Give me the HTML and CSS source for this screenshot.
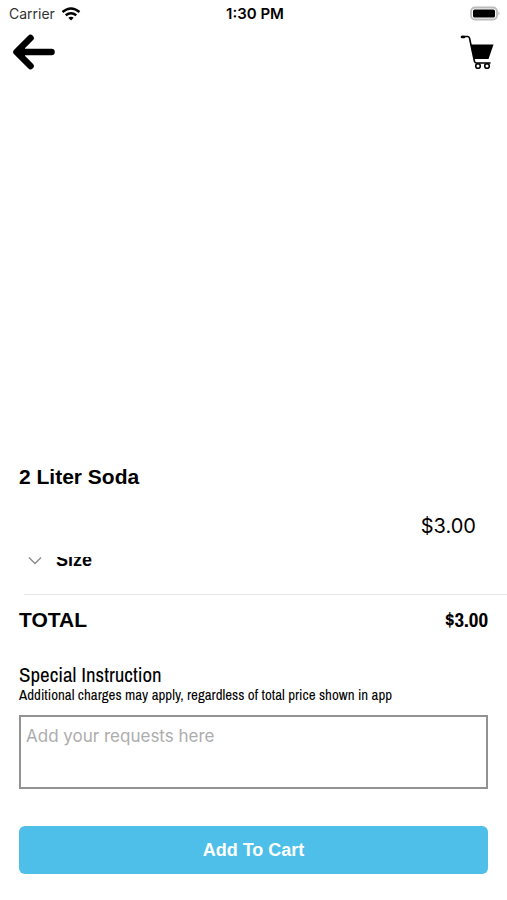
FILE: index.html
```html
<!DOCTYPE html>
<html lang="en">
<head>
<meta charset="utf-8">
<meta name="viewport" content="width=device-width, initial-scale=1">
<title>2 Liter Soda</title>
<link rel="stylesheet" href="styles.css">
</head>
<body>
<div class="status">
  <div class="carrier">
    <span>Carrier</span>
    <svg width="20" height="14" viewBox="0 0 20 14" fill="none" stroke="#000" stroke-width="2.400" aria-hidden="true">
      <path d="M1.500 5Q10-2 18.500 5"/>
      <path d="M4.700 8.300Q10 4 15.300 8.300"/>
      <path d="M7.300 10.700Q10 8.700 12.700 10.700L10 13.500Z" fill="#000" stroke="none"/>
    </svg>
  </div>
  <time class="clock">1:30 PM</time>
  <svg class="battery" width="31" height="16" viewBox="0 0 31 16" aria-hidden="true">
    <rect x="1" y="1.500" width="26" height="12" rx="4" fill="#fff" stroke="#bbb" stroke-width="1.800"/>
    <rect x="3" y="3.500" width="22" height="8" rx="1.500" fill="#000"/>
    <path d="M28.500 5.500Q30.500 7.500 28.500 9.500Z" fill="#aaa"/>
  </svg>
</div>
<header class="nav">
  <button class="icon-button" type="button" aria-label="Back">
    <svg width="42" height="36" viewBox="0 0 42 36" fill="none" stroke="#000" stroke-width="6.600" stroke-linecap="round" stroke-linejoin="round">
      <path d="M17.500 4L3.500 18L17.500 32M4 18H38.500"/>
      <path d="M5 18L11 13V23Z" fill="#000" stroke-width="2"/>
    </svg>
  </button>
  <button class="icon-button" type="button" aria-label="Cart">
    <svg width="34" height="36" viewBox="0 0 34 36" fill="none" stroke="#000">
      <path d="M2 2.500H7.500Q9 2.500 9.500 4L14.500 27.500Q15 29 16.500 29H30" stroke-width="1.600" stroke-linecap="round"/>
      <path d="M2 3H4" stroke-width="2.600" stroke-linecap="round"/>
      <path d="M10.500 10.500H33.500L28.500 25H14Z" fill="#000" stroke="none"/>
      <circle cx="18" cy="32" r="2.300" fill="#fff" stroke-width="1.600"/>
      <circle cx="27" cy="32" r="2.300" fill="#fff" stroke-width="1.600"/>
    </svg>
  </button>
</header>
<main class="item">
  <div class="photo"></div>
  <h1 class="name">2 Liter Soda</h1>
  <p class="price">$3.00</p>
  <section class="options">
    <button class="option" type="button">
      <svg width="14" height="8" viewBox="0 0 14 8" fill="none" stroke="#8a8a8a" stroke-width="1.300" aria-hidden="true"><path d="M1 0.500L7 6.500L13 0.500"/></svg>
      <span>Size</span>
    </button>
  </section>
  <div class="total"><span>TOTAL</span><span class="amount">$3.00</span></div>
  <label class="label" for="requests">Special Instruction</label>
  <p class="note">Additional charges may apply, regardless of total price shown in app</p>
  <textarea class="requests" id="requests" placeholder="Add your requests here"></textarea>
  <button class="add" type="button">Add To Cart</button>
</main>
</body>
</html>
```
FILE: styles.css
```css
* {
  box-sizing: border-box;
}

body {
  margin: 0;
  min-height: 100vh;
  display: flex;
  flex-direction: column;
  background: #fff;
  color: #000;
  font-family: "Liberation Sans", Arial, sans-serif;
}

button {
  font: inherit;
  color: inherit;
  border: 0;
  padding: 0;
  background: none;
}

h1,
p {
  margin: 0;
}

svg {
  display: block;
}

.status {
  display: grid;
  grid-template-columns: 1fr auto 1fr;
  align-items: center;
  height: 28px;
  padding: 0 6px 0 9px;
  font: 14px/28px Inter, sans-serif;
}

.carrier {
  display: flex;
  align-items: center;
  gap: 6px;
  color: #333;
}

.clock {
  font-size: 15px;
  font-weight: 600;
}

.battery {
  justify-self: end;
}

.nav {
  display: flex;
  justify-content: space-between;
  align-items: center;
  height: 48px;
  padding: 0 13px;
}

.item {
  flex: 1;
  display: flex;
  flex-direction: column;
  padding: 0 19px 26px;
}

.photo {
  flex: 1;
  min-height: 120px;
}

.name {
  font-size: 21px;
  line-height: 24px;
}

.price {
  margin-top: 25px;
  padding-right: 12px;
  text-align: right;
  font: 20px/24px Inter, sans-serif;
}

.options {
  margin: 19px -19px 0 5px;
  height: 38px;
  overflow: hidden;
  border-bottom: 1px solid #e6e6e6;
}

.option {
  display: flex;
  align-items: center;
  gap: 14px;
  margin-top: -7px;
  padding-left: 4px;
  font-size: 18px;
  line-height: 20px;
  font-weight: bold;
}

.option svg {
  margin-top: 2px;
}

.total {
  display: flex;
  justify-content: space-between;
  margin-top: 13px;
  font-size: 21px;
  line-height: 24px;
  font-weight: bold;
}

.amount,
.label,
.note {
  font-family: "Archivo Narrow", "Roboto Condensed", Roboto, sans-serif;
}

.label {
  margin-top: 31px;
  font-size: 21px;
  line-height: 24px;
}

.note {
  font-size: 15px;
  line-height: 16px;
}

.requests {
  display: block;
  width: 100%;
  height: 74px;
  margin-top: 12px;
  padding: 9px 5px;
  border: 2px solid #929292;
  border-radius: 0;
  resize: none;
  font: 17px/20px Inter, sans-serif;
}

.requests::placeholder {
  color: #adadad;
}

.add {
  height: 48px;
  margin-top: 37px;
  border-radius: 6px;
  background: #4dbfe8;
  color: #fff;
  font-size: 18px;
  font-weight: bold;
}
```
